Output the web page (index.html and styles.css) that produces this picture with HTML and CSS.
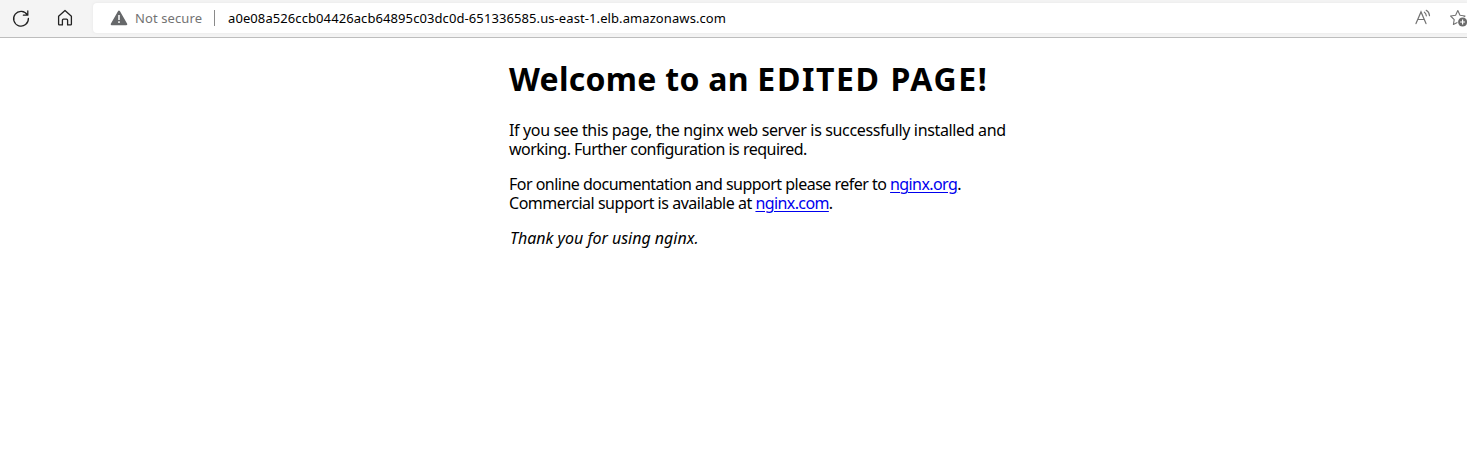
FILE: index.html
```
<!DOCTYPE html>
<html lang="en">
<head>
<meta charset="utf-8">
<title>Welcome to an EDITED PAGE!</title>
<link rel="stylesheet" href="styles.css">
</head>
<body>
<header class="toolbar">
  <svg class="icon reload" width="20" height="20" viewBox="0 0 20 20" fill="none" stroke="#222" stroke-width="1.3" stroke-linecap="round" stroke-linejoin="round"><path d="M16.4 7A7.4 7.4 0 1 0 17.4 10.3M16.8 2.8V7.2H12.4"/></svg>
  <svg class="icon home" width="20" height="20" viewBox="0 0 20 20" fill="none" stroke="#222" stroke-width="1.3" stroke-linejoin="round"><path d="M3.6 8.3L10 2.5L16.4 8.3V16.2Q16.4 16.9 15.7 16.9H12.6V12.2Q12.6 11.2 11.6 11.2H8.4Q7.4 11.2 7.4 12.2V16.9H4.3Q3.6 16.9 3.6 16.2Z"/></svg>
  <div class="address">
    <svg class="warning" width="18" height="16" viewBox="0 0 18 16"><path d="M9 1.6L16.3 14.2H1.7Z" fill="#66686a" stroke="#66686a" stroke-width="2" stroke-linejoin="round"/><path d="M9 5V10M9 11.3V13" stroke="#fff" stroke-width="1.5"/></svg>
    <span class="status">Not secure</span>
    <span class="divider"></span>
    <span class="url">a0e08a526ccb04426acb64895c03dc0d-651336585.us-east-1.elb.amazonaws.com</span>
    <svg class="read" width="20" height="20" viewBox="0 0 20 20" fill="none" stroke="#737373" stroke-width="1.2" stroke-linecap="round"><path d="M3 15.6L8 3.9L13 15.6M4.8 11.5H11.2M11.4 4.2Q13.1 5.3 13.3 7.8M13.2 2.3Q16.2 4 16.5 7.6"/></svg>
    <svg class="star" width="20" height="20" viewBox="0 0 20 20"><path d="M8.8 2.6L11 7.3L16 8L12.4 11.6L13.1 16.5L8.8 14.2L4.4 16.5L5.2 11.6L1.6 8L6.6 7.3Z" fill="none" stroke="#737373" stroke-width="1.1" stroke-linejoin="round"/><circle cx="13.6" cy="14" r="5.2" fill="#fff"/><circle cx="13.6" cy="14" r="4.5" fill="#6b6b6b"/><path d="M11.1 14H16.1M13.6 11.5V16.5" stroke="#fff" stroke-width="1.2"/></svg>
  </div>
</header>
<main class="content">
  <h1 class="title">Welcome to an <span class="caps">EDITED PAGE!</span></h1>
  <p class="text"><span class="intro">If you see this page, the nginx web server is successfully installed and</span><br>working. Further configuration is required.</p>
  <p class="text">For online documentation and support please refer to <a class="link" href="#">nginx.org</a>.<br><span class="support">Commercial support is available at </span><a class="link" href="#">nginx.com</a>.</p>
  <p class="text"><em class="thanks">Thank you for using nginx.</em></p>
</main>
</body>
</html>
```
FILE: styles.css
```
body { margin: 0; background: #fff; color: #000; font-family: "Noto Sans", sans-serif; overflow: hidden; }
.toolbar { display: flex; align-items: center; box-sizing: border-box; height: 38px; padding: 0 0 2px 11px; background: #f4f4f4; border-bottom: 1px solid #bdbdbd; }
.icon { flex: none; }
.home { margin-left: 24px; }
.address { flex: 1; display: flex; align-items: center; height: 30px; margin-left: 18px; padding-left: 17px; background: #fff; border-radius: 4px 0 0 4px; box-shadow: 0 0 3px #e4e4e4; white-space: nowrap; font-size: 13px; }
.warning { flex: none; }
.status { width: 79px; margin-left: 7px; color: #737373; letter-spacing: 0.1px; }
.divider { width: 1px; height: 16px; background: #8a8a8a; }
.url { margin-left: 13px; letter-spacing: 0.09px; }
.read { margin: 0 0 0 auto; flex: none; }
.star { margin: 0 -2px 0 16px; flex: none; }
.content { width: 560px; margin: 19px 0 0 509px; white-space: nowrap; }
.title { margin: 0; font-size: 32px; line-height: 43px; font-weight: 700; letter-spacing: 0.27px; }
.caps { letter-spacing: 1.6px; }
.text { margin: 21px 0 0; font-size: 16px; line-height: 19px; letter-spacing: -0.515px; }
.text + .text { margin-top: 16px; }
.intro { letter-spacing: -0.355px; }
.support { letter-spacing: -0.47px; }
.thanks { padding-left: 1px; letter-spacing: -0.02px; }
.link { color: #0000ee; letter-spacing: -0.6px; text-decoration: underline; text-underline-offset: 2px; text-decoration-thickness: 1px; }
```
